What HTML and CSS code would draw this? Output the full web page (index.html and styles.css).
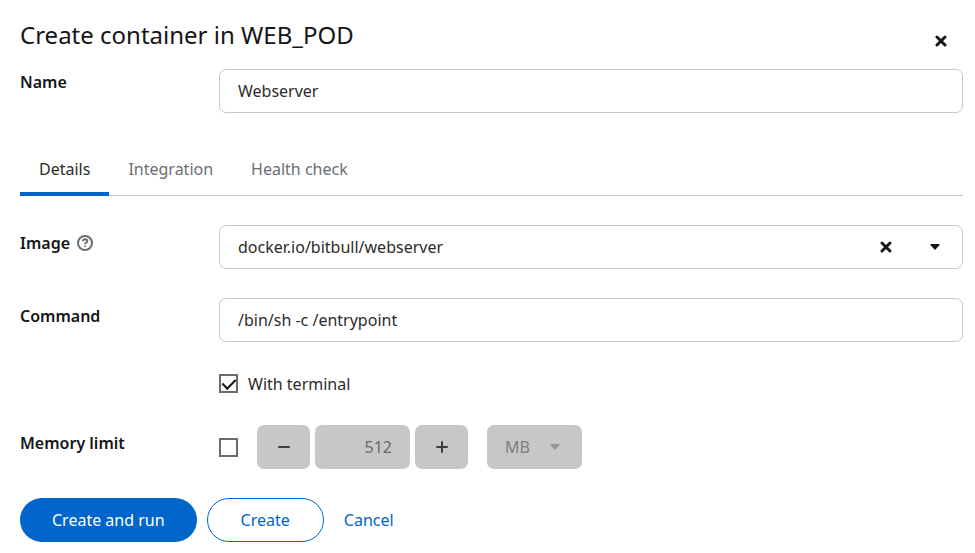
FILE: index.html
```
<!DOCTYPE html>
<html lang="en">
<head>
  <meta charset="UTF-8" />
  <meta name="viewport" content="width=device-width, initial-scale=1.0" />
  <title>Create container in WEB_POD</title>
  <link rel="stylesheet" href="styles.css">
</head>
<body>
  <form class="modal">
    <header class="modal-header">
      <h1>Create container in WEB_POD</h1>
      <button type="button" class="icon-btn" aria-label="Close">
        <svg class="icon-close" viewBox="0 0 12 12"><path d="M2 2L10 10M10 2L2 10" /></svg>
      </button>
    </header>

    <div class="form-row name-row">
      <label class="form-label" for="name">Name</label>
      <input type="text" id="name" class="input-field" value="Webserver" />
    </div>

    <nav class="tabs">
      <button type="button" class="tab active">Details</button>
      <button type="button" class="tab">Integration</button>
      <button type="button" class="tab">Health check</button>
    </nav>

    <div class="form-row">
      <div class="form-label">
        <label for="image">Image</label>
        <button type="button" class="help-btn" aria-label="Image help">
          <svg class="icon-help" viewBox="0 0 16 16">
            <circle cx="8" cy="8" r="7" />
            <path d="M5.8 6.3C5.9 4.9 6.8 4.2 8.1 4.2C9.4 4.2 10.3 5 10.3 6.1C10.3 7.6 8.1 7.6 8.1 9.3" />
            <path d="M8.1 10.6V12.1" />
          </svg>
        </button>
      </div>
      <div class="combo">
        <input type="text" id="image" class="combo-input" value="docker.io/bitbull/webserver" />
        <button type="button" class="icon-btn" aria-label="Clear">
          <svg class="icon-close" viewBox="0 0 12 12"><path d="M2 2L10 10M10 2L2 10" /></svg>
        </button>
        <button type="button" class="icon-btn" aria-label="Open list">
          <svg class="icon-caret" viewBox="0 0 10 6"><path d="M0.8 0H9.2Q10 0.3 9.6 1L5.5 5.5Q5 6 4.5 5.5L0.4 1Q0 0.3 0.8 0Z" /></svg>
        </button>
      </div>
    </div>

    <div class="form-row">
      <label class="form-label" for="command">Command</label>
      <input type="text" id="command" class="input-field" value="/bin/sh -c /entrypoint" />
    </div>

    <div class="form-row">
      <div class="form-control">
        <input type="checkbox" id="terminal" class="checkbox" checked />
        <label for="terminal">With terminal</label>
      </div>
    </div>

    <div class="form-row">
      <label class="form-label" for="memoryLimit">Memory limit</label>
      <div class="form-control memory">
        <input type="checkbox" id="memoryLimit" class="checkbox" />
        <div class="number-input">
          <button type="button" class="step-btn" aria-label="Minus" disabled>
            <svg class="icon-step" viewBox="0 0 14 14"><path d="M2 7H12" /></svg>
          </button>
          <input type="text" class="number-field" aria-label="Memory limit value" value="512" disabled />
          <button type="button" class="step-btn" aria-label="Plus" disabled>
            <svg class="icon-step" viewBox="0 0 14 14"><path d="M2 7H12M7 2V12" /></svg>
          </button>
        </div>
        <div class="unit">
          <select class="unit-select" aria-label="Memory unit" disabled>
            <option>MB</option>
          </select>
          <svg class="icon-caret" viewBox="0 0 10 6"><path d="M0.8 0H9.2Q10 0.3 9.6 1L5.5 5.5Q5 6 4.5 5.5L0.4 1Q0 0.3 0.8 0Z" /></svg>
        </div>
      </div>
    </div>

    <footer class="actions">
      <button type="button" class="button primary">Create and run</button>
      <button type="button" class="button secondary">Create</button>
      <button type="button" class="button link">Cancel</button>
    </footer>
  </form>
</body>
</html>
```
FILE: styles.css
```
* {
  box-sizing: border-box;
}
body {
  margin: 0;
  background-color: #fff;
  color: #151515;
  font-family: "Noto Sans", "Open Sans", sans-serif;
  font-size: 16px;
  line-height: 24px;
}
button,
input,
select {
  margin: 0;
  font: inherit;
  color: inherit;
}
button {
  padding: 0;
  border: none;
  background: none;
  cursor: pointer;
}
svg {
  display: block;
}
.modal {
  display: flex;
  flex-direction: column;
  gap: 29px;
  padding: 20px 12px 10px 20px;
}
.modal-header {
  display: flex;
  justify-content: space-between;
  align-items: flex-start;
  height: 20px;
}
.modal-header h1 {
  margin: 0;
  font-size: 24px;
  font-weight: 400;
  line-height: 30px;
}
.icon-btn {
  display: flex;
  align-items: center;
  justify-content: center;
  width: 44px;
  height: 42px;
}
.icon-close {
  width: 12px;
  height: 12px;
  fill: none;
  stroke: #151515;
  stroke-width: 3;
  stroke-linecap: round;
}
.icon-caret {
  width: 10px;
  height: 6px;
  fill: #151515;
}
.form-row {
  display: grid;
  grid-template-columns: 199px 1fr;
}
.form-label {
  display: flex;
  align-items: center;
  align-self: start;
  gap: 7px;
  padding-top: 6px;
  font-weight: 600;
}
.name-row .form-label {
  padding-top: 1px;
}
.help-btn {
  width: 16px;
  height: 16px;
}
.icon-help {
  width: 16px;
  height: 16px;
  fill: none;
  stroke: #6a6e73;
  stroke-width: 2;
}
.input-field,
.combo {
  width: 100%;
  height: 44px;
  border: 1px solid #c7c7c7;
  border-radius: 7px;
  background-color: #fff;
  color: #2b2b2b;
}
.input-field {
  padding: 0 18px;
}
.combo {
  display: flex;
  padding-right: 5px;
  gap: 5px;
}
.combo-input {
  flex: 1;
  min-width: 0;
  padding: 0 0 0 18px;
  border: none;
  background: none;
}
.tabs {
  display: flex;
  height: 54px;
  border-bottom: 1px solid #c7c7c7;
}
.tab {
  height: 54px;
  padding: 0 19px;
  color: #6a6e73;
}
.tab.active {
  box-shadow: inset 0 -4px #06c;
  color: #2b2b2b;
}
.form-control {
  display: flex;
  align-items: center;
  grid-column: 2;
  gap: 10px;
  min-height: 25px;
  color: #2b2b2b;
}
.checkbox {
  display: flex;
  justify-content: center;
  width: 19px;
  height: 19px;
  appearance: none;
  border: 2px solid #6a6a6a;
  background-color: #fff;
}
.checkbox:checked::before {
  content: "";
  width: 6px;
  height: 11px;
  border: solid #151515;
  border-width: 0 2px 2px 0;
  transform: rotate(45deg);
}
.memory {
  gap: 19px;
}
.number-input {
  display: flex;
  gap: 5px;
}
.step-btn,
.number-field,
.unit-select {
  height: 44px;
  border: none;
  border-radius: 7px;
  background-color: #c7c7c7;
  color: #6a6a6a;
  opacity: 1;
}
.step-btn {
  display: flex;
  align-items: center;
  justify-content: center;
  width: 53px;
}
.icon-step {
  width: 14px;
  height: 14px;
  fill: none;
  stroke: #3c3f42;
  stroke-width: 2;
  stroke-linecap: round;
}
.number-field {
  width: 95px;
  padding: 0 18px;
  text-align: right;
}
.unit {
  display: grid;
  align-items: center;
}
.unit-select,
.unit .icon-caret {
  grid-area: 1 / 1;
}
.unit-select {
  width: 95px;
  padding: 0 18px;
  appearance: none;
  color: #7d7d7d;
}
.unit .icon-caret {
  justify-self: end;
  margin-right: 22px;
  fill: #969696;
  pointer-events: none;
}
.actions {
  display: flex;
  gap: 10px;
}
.button {
  height: 44px;
  padding: 0 33px;
  border: 1px solid transparent;
  border-radius: 22px;
}
.primary {
  padding: 0 31px;
  background-color: #06c;
  color: #fff;
}
.secondary {
  border-color: #06c;
  color: #06c;
}
.link {
  padding: 0 9px;
  color: #06c;
}
```
